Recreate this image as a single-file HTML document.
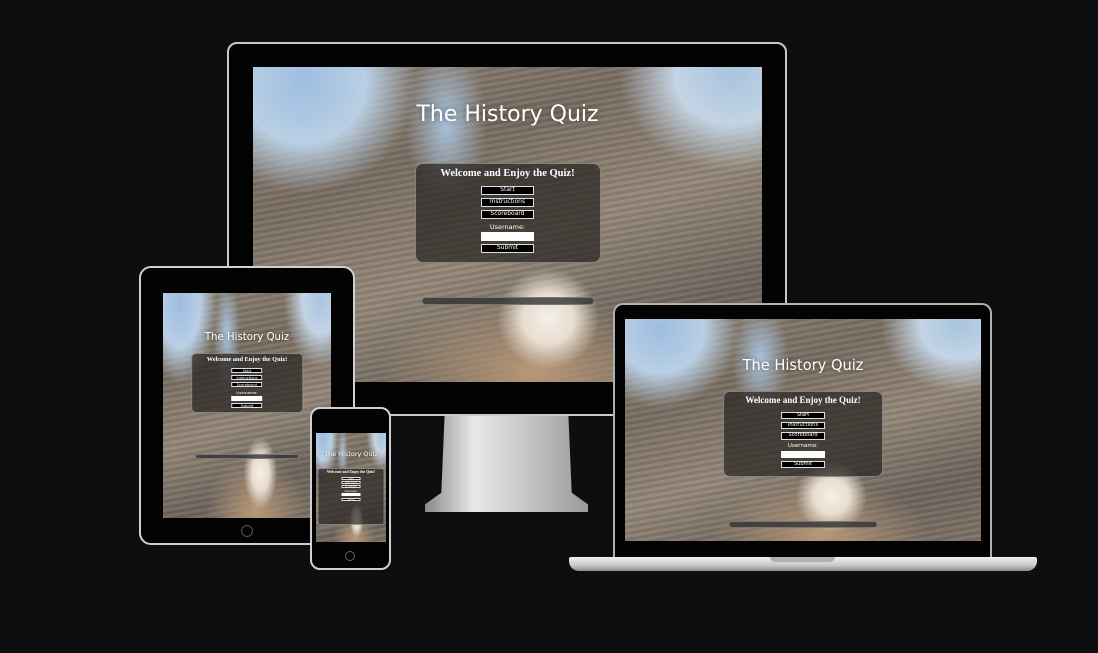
<!DOCTYPE html>
<html><head><meta charset="utf-8"><style>
*{margin:0;padding:0;box-sizing:border-box}
body{width:1098px;height:653px;background:#0e0d0f;position:relative;overflow:hidden;font-family:"Liberation Sans",sans-serif}
.abs{position:absolute}
.scr{position:absolute;overflow:hidden;
background:
radial-gradient(ellipse 10% 16% at 58% 80%,#f4f0ea 0%,#e8ddd0 50%,rgba(200,170,140,0) 100%),
radial-gradient(ellipse 30% 25% at 55% 97%,#b89878 0%,rgba(150,120,100,0) 100%),
radial-gradient(ellipse 22% 35% at 10% 5%,#9dbde0 0%,#b9cfe4 55%,rgba(150,170,190,0) 100%),
radial-gradient(ellipse 22% 30% at 94% 3%,#a8c4e0 0%,#c4d4e4 50%,rgba(150,170,190,0) 100%),
radial-gradient(ellipse 8% 25% at 38% 18%,#a9c3dc 0%,rgba(150,170,190,0) 100%),
repeating-linear-gradient(170deg,rgba(0,0,0,.08) 0 3px,rgba(255,255,255,.05) 3px 6px),
linear-gradient(160deg,#8d8174 0%,#7a6e62 30%,#948878 55%,#6d655d 80%,#7e7366 100%);}
.t{position:absolute;left:0;right:0;text-align:center;color:#fff;font-family:"DejaVu Sans",sans-serif;text-shadow:0 0 .3em rgba(0,0,0,.5)}
.box{position:absolute;left:50%;transform:translateX(-50%);width:18.6em;height:10em;background:rgba(40,36,34,.72);border:.15em solid rgba(200,200,200,.5);border-radius:.8em;text-align:center;color:#fff}
.box h2{font-family:"Liberation Serif",serif;font-size:1.05em;margin-top:.35em;margin-bottom:.7em;font-weight:bold}
.b{display:block;margin:.55em auto 0;width:8.7em;height:1.45em;background:#000;border:.15em solid #ddd;font-size:.6em;line-height:1.15em;color:#fff;font-family:"DejaVu Sans",sans-serif;overflow:hidden;white-space:nowrap}
.lbl{font-size:.65em;margin-top:.6em;font-family:"DejaVu Sans",sans-serif}
.in{display:block;margin:.3em auto 0;width:8.7em;height:1.45em;background:#fff;font-size:.6em}
.ft{position:absolute;left:50%;transform:translateX(-50%);width:17.3em;height:.8em;background:rgba(50,50,50,.8);border:.1em solid #777;border-radius:.4em}
</style></head><body>

<!-- monitor -->
<div class="abs" style="left:227px;top:42px;width:560px;height:374px;background:#030303;border:2px solid #c8c8c8;border-radius:10px"></div>
<div class="abs" style="left:425px;top:416px;width:163px;height:96px;background:linear-gradient(90deg,#8a8a8a,#e8e8e8 30%,#c8c8c8 60%,#9a9a9a);clip-path:polygon(12% 0,88% 0,90% 80%,100% 92%,100% 100%,0 100%,0 92%,10% 80%)"></div>
<div class="scr" style="left:253px;top:67px;width:509px;height:315px;font-size:10px">
 <div class="t" style="top:1.6em;font-size:2.2em">The History Quiz</div>
 <div class="box" style="top:9.6em"><h2>Welcome and Enjoy the Quiz!</h2>
 <span class="b">Start</span><span class="b">Instructions</span><span class="b">Scoreboard</span>
 <div class="lbl">Username:</div><span class="in"></span><span class="b">Submit</span></div>
 <div class="ft" style="top:23em"></div>
</div>

<!-- tablet -->
<div class="abs" style="left:139px;top:266px;width:216px;height:279px;background:#030303;border:2px solid #d0d0d0;border-radius:12px"></div>
<div class="abs" style="left:241px;top:525px;width:12px;height:12px;border:1px solid #555;border-radius:50%"></div>
<div class="scr" style="left:163px;top:293px;width:168px;height:225px;font-size:6px">
 <div class="t" style="top:3.8em;font-size:1.7em">The History Quiz</div>
 <div class="box" style="top:10em"><h2>Welcome and Enjoy the Quiz!</h2>
 <span class="b">Start</span><span class="b">Instructions</span><span class="b">Scoreboard</span>
 <div class="lbl">Username:</div><span class="in"></span><span class="b">Submit</span></div>
 <div class="ft" style="top:26.8em"></div>
</div>

<!-- phone -->
<div class="abs" style="left:310px;top:407px;width:81px;height:163px;background:#030303;border:2px solid #d0d0d0;border-radius:10px"></div>
<div class="abs" style="left:345px;top:551px;width:10px;height:10px;border:1px solid #666;border-radius:50%"></div>
<div class="scr" style="left:316px;top:433px;width:70px;height:109px;font-size:3.6px">
 <div class="t" style="top:2.6em;font-size:1.8em">The History Quiz</div>
 <div class="box" style="top:9.6em;height:16em"><h2>Welcome and Enjoy the Quiz!</h2>
 <span class="b">Start</span><span class="b">Instructions</span><span class="b">Scoreboard</span>
 <div class="lbl">Username:</div><span class="in"></span><span class="b">Submit</span></div>
</div>

<!-- laptop -->
<div class="abs" style="left:613px;top:303px;width:379px;height:254px;background:#030303;border:2px solid #b0b0b0;border-bottom:none;border-radius:10px 10px 0 0"></div>
<div class="abs" style="left:569px;top:557px;width:468px;height:14px;background:linear-gradient(#f2f2f2,#c8c8c8 60%,#8a8a8a);border-radius:2px 2px 10px 10px"></div>
<div class="abs" style="left:770px;top:557px;width:65px;height:5px;background:#b0b0b0;border-radius:0 0 5px 5px"></div>
<div class="scr" style="left:625px;top:319px;width:356px;height:222px;font-size:8.6px">
 <div class="t" style="top:2.6em;font-size:1.7em">The History Quiz</div>
 <div class="box" style="top:8.4em"><h2>Welcome and Enjoy the Quiz!</h2>
 <span class="b">Start</span><span class="b">Instructions</span><span class="b">Scoreboard</span>
 <div class="lbl">Username:</div><span class="in"></span><span class="b">Submit</span></div>
 <div class="ft" style="top:23.5em"></div>
</div>
</body></html>
